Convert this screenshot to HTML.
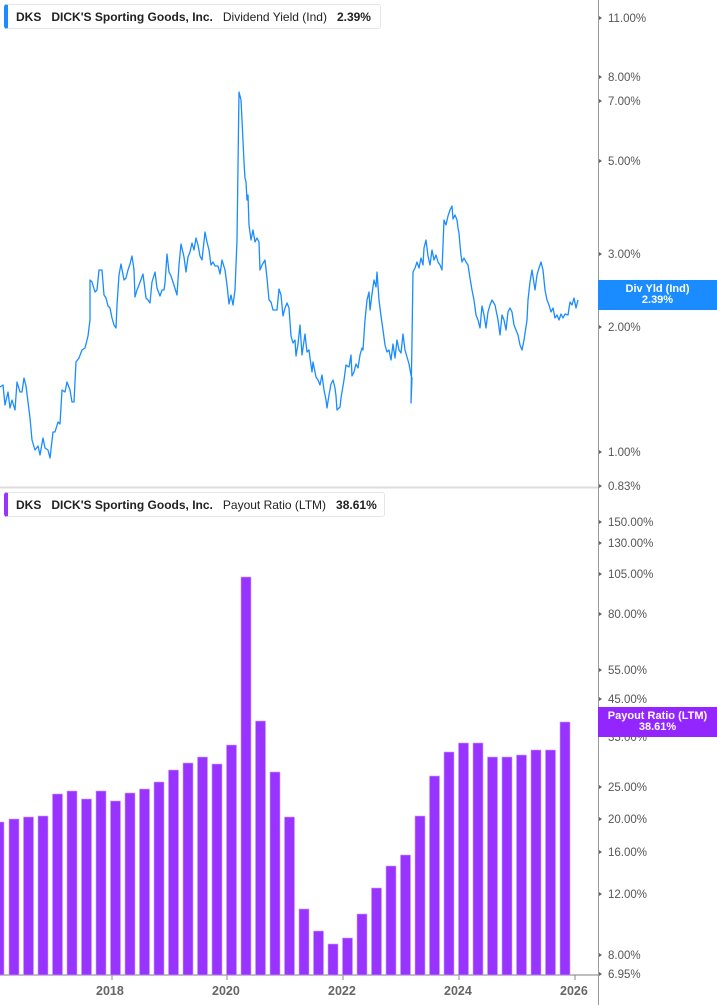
<!DOCTYPE html>
<html><head><meta charset="utf-8"><style>
html,body{margin:0;padding:0;background:#fff;}
body{width:717px;height:1005px;overflow:hidden;position:relative;font-family:"Liberation Sans",sans-serif;}
.leg{position:absolute;left:4px;height:25px;border:1px solid #e6e6e6;border-left:4px solid;border-radius:3px;background:#fff;font-size:12px;color:#222;line-height:25px;padding-left:8px;white-space:nowrap;box-sizing:border-box;}
.leg b{font-weight:bold;}
.ax{position:absolute;left:608px;font-size:11.5px;color:#555;line-height:12px;margin-top:1px;}
.yr{position:absolute;top:984px;font-size:12.5px;font-weight:bold;color:#666;}
.lab{position:absolute;left:598px;width:119px;color:#fff;font-weight:bold;font-size:11px;text-align:center;line-height:11px;box-sizing:border-box;padding-top:4px;}
</style></head><body>
<svg width="717" height="1005" style="position:absolute;left:0;top:0">
<line x1="0" y1="487.5" x2="598" y2="487.5" stroke="#ddd" stroke-width="2"/>
<line x1="598.5" y1="0" x2="598.5" y2="1005" stroke="#999" stroke-width="1"/>
<line x1="0" y1="975" x2="598" y2="975" stroke="#aaa" stroke-width="1.5"/>
<g stroke="#888" stroke-width="1">
<line x1="112" y1="975" x2="112" y2="980"/><line x1="227" y1="975" x2="227" y2="980"/><line x1="343" y1="975" x2="343" y2="980"/><line x1="459" y1="975" x2="459" y2="980"/><line x1="575" y1="975" x2="575" y2="980"/>
</g>
<g fill="#666">
<path d="M599 16l3 2-3 2z"/><path d="M599 75l3 2-3 2z"/><path d="M599 99l3 2-3 2z"/><path d="M599 159l3 2-3 2z"/><path d="M599 252l3 2-3 2z"/><path d="M599 325l3 2-3 2z"/><path d="M599 450l3 2-3 2z"/><path d="M599 484l3 2-3 2z"/>
<path d="M599 520l3 2-3 2z"/><path d="M599 541l3 2-3 2z"/><path d="M599 572l3 2-3 2z"/><path d="M599 612l3 2-3 2z"/><path d="M599 668l3 2-3 2z"/><path d="M599 697l3 2-3 2z"/><path d="M599 785l3 2-3 2z"/><path d="M599 817l3 2-3 2z"/><path d="M599 850l3 2-3 2z"/><path d="M599 892l3 2-3 2z"/><path d="M599 953l3 2-3 2z"/><path d="M599 972l3 2-3 2z"/>
</g>
<polyline fill="none" stroke="#1a8cff" stroke-width="1.3" stroke-linejoin="round" points="0,387 3,385 5,405 8,392 10,408 12,400 15,410 17,382 20,392 22,392 24,378 26,386 30,418 32,440 35,450 38,446 40,455 43,438 45,448 48,450 50,458 53,432 55,432 58,422 60,424 62,390 65,392 67,382 70,390 72,402 74,402 76,362 79,358 82,350 85,348 88,336 90,320 90,280 92,282 95,292 97,290 99,270 102,270 104,295 106,298 108,306 110,308 112,318 114,325 116,328 117,305 119,275 121,264 124,280 126,278 128,270 130,264 132,256 134,270 135,297 137,290 139,285 143,274 146,298 148,300 150,303 152,282 155,272 157,288 160,296 162,290 164,290 165,283 167,254 169,272 171,276 173,282 177,295 179,265 181,244 184,257 186,272 188,257 190,252 192,243 194,250 196,238 198,245 200,256 202,260 205,232 207,242 209,250 211,265 213,262 215,266 218,266 220,274 222,260 225,270 227,285 229,304 231,295 233,305 235,290 237,240 239,92 241,100 242,120 243,141 244,162 245,178 246,182 247,200 248,195 249,225 251,240 253,230 255,242 257,238 259,242 260,270 262,265 265,260 267,278 269,300 271,302 273,310 275,310 277,310 279,289 281,295 283,316 285,308 287,303 289,308 291,336 293,343 295,340 296,356 298,344 300,325 302,355 305,334 307,352 309,350 310,358 312,372 313,362 316,377 318,380 320,385 322,375 324,390 326,400 327,408 329,395 331,384 333,380 335,388 336,396 337,410 340,407 341,398 344,380 346,365 349,367 351,355 352,376 354,372 356,364 358,368 360,355 362,348 363,350 365,320 367,300 369,292 370,310 372,294 374,280 376,287 377,272 379,300 381,316 383,330 385,345 387,352 389,350 391,360 393,344 395,358 397,340 399,350 401,353 403,334 405,350 407,357 409,364 411,375 412,378 411,403 412,340 413,272 415,268 417,262 419,268 421,258 423,265 424,248 426,240 428,256 430,265 432,250 434,260 436,255 438,262 440,265 442,270 443,245 444,220 446,225 448,216 450,210 452,206 453,219 455,215 457,220 458,228 459,233 460,245 461,255 462,262 464,258 466,262 468,265 470,278 472,290 474,300 476,315 478,320 480,328 482,306 484,315 486,328 488,312 490,305 492,300 495,305 498,320 500,335 502,315 504,320 506,330 508,312 510,308 512,312 514,325 516,330 518,335 520,345 522,350 524,340 527,320 528,300 530,282 532,270 535,290 537,275 539,268 541,262 543,270 545,290 547,300 549,305 551,312 553,308 555,318 557,315 559,320 561,314 563,318 565,314 568,315 570,302 572,305 574,298 576,308 578,300"/>
<g fill="#9933ff" stroke="#c9a0ff" stroke-width="0.6">
<rect x="-6" y="822" width="10" height="153"/>
<rect x="9" y="819" width="10" height="156"/>
<rect x="23.5" y="817" width="10" height="158"/>
<rect x="38" y="816" width="10" height="159"/>
<rect x="52.5" y="794" width="10" height="181"/>
<rect x="67" y="791" width="10" height="184"/>
<rect x="81.5" y="799" width="10" height="176"/>
<rect x="96" y="791" width="10" height="184"/>
<rect x="110.5" y="801" width="10" height="174"/>
<rect x="125" y="793" width="10" height="182"/>
<rect x="139.5" y="789" width="10" height="186"/>
<rect x="154" y="782" width="10" height="193"/>
<rect x="168.5" y="770" width="10" height="205"/>
<rect x="183" y="763" width="10" height="212"/>
<rect x="197.5" y="757" width="10" height="218"/>
<rect x="212" y="764" width="10" height="211"/>
<rect x="226.5" y="745" width="10" height="230"/>
<rect x="241" y="577" width="10" height="398"/>
<rect x="255.5" y="721" width="10" height="254"/>
<rect x="270" y="772" width="10" height="203"/>
<rect x="284.5" y="817" width="10" height="158"/>
<rect x="299" y="909" width="10" height="66"/>
<rect x="313.5" y="931" width="10" height="44"/>
<rect x="328" y="944" width="10" height="31"/>
<rect x="342.5" y="938" width="10" height="37"/>
<rect x="357" y="914" width="10" height="61"/>
<rect x="371.5" y="888" width="10" height="87"/>
<rect x="386" y="866" width="10" height="109"/>
<rect x="400.5" y="855" width="10" height="120"/>
<rect x="415" y="816" width="10" height="159"/>
<rect x="429.5" y="776" width="10" height="199"/>
<rect x="444" y="752" width="10" height="223"/>
<rect x="458.5" y="743" width="10" height="232"/>
<rect x="473" y="743" width="10" height="232"/>
<rect x="487.5" y="757" width="10" height="218"/>
<rect x="502" y="757" width="10" height="218"/>
<rect x="516.5" y="755" width="10" height="220"/>
<rect x="531" y="750" width="10" height="225"/>
<rect x="545.5" y="750" width="10" height="225"/>
<rect x="560" y="722" width="10" height="253"/>
</g>
</svg>
<div class="leg" style="top:4px;width:377px;border-left-color:#1a8cff"><b>DKS</b>&nbsp;&nbsp;&nbsp;<b>DICK'S Sporting Goods, Inc.</b>&nbsp;&nbsp;&nbsp;Dividend Yield (Ind)&nbsp;&nbsp;&nbsp;<b>2.39%</b></div>
<div class="leg" style="top:492px;width:381px;border-left-color:#9933ff"><b>DKS</b>&nbsp;&nbsp;&nbsp;<b>DICK'S Sporting Goods, Inc.</b>&nbsp;&nbsp;&nbsp;Payout Ratio (LTM)&nbsp;&nbsp;&nbsp;<b>38.61%</b></div>
<div class="ax" style="top:12px">11.00%</div>
<div class="ax" style="top:71px">8.00%</div>
<div class="ax" style="top:95px">7.00%</div>
<div class="ax" style="top:155px">5.00%</div>
<div class="ax" style="top:248px">3.00%</div>
<div class="ax" style="top:321px">2.00%</div>
<div class="ax" style="top:446px">1.00%</div>
<div class="ax" style="top:480px">0.83%</div>
<div class="ax" style="top:516px">150.00%</div>
<div class="ax" style="top:537px">130.00%</div>
<div class="ax" style="top:568px">105.00%</div>
<div class="ax" style="top:608px">80.00%</div>
<div class="ax" style="top:664px">55.00%</div>
<div class="ax" style="top:693px">45.00%</div>
<div class="ax" style="top:731px">35.00%</div>
<div class="ax" style="top:781px">25.00%</div>
<div class="ax" style="top:813px">20.00%</div>
<div class="ax" style="top:846px">16.00%</div>
<div class="ax" style="top:888px">12.00%</div>
<div class="ax" style="top:949px">8.00%</div>
<div class="ax" style="top:968px">6.95%</div>
<div class="lab" style="top:280px;height:30px;background:#1a8cff">Div Yld (Ind)<br>2.39%</div>
<div class="lab" style="top:707px;height:30px;background:#9326ff">Payout Ratio (LTM)<br>38.61%</div>
<div class="yr" style="left:96px">2018</div>
<div class="yr" style="left:212px">2020</div>
<div class="yr" style="left:328px">2022</div>
<div class="yr" style="left:444px">2024</div>
<div class="yr" style="left:560px">2026</div>
</body></html>
